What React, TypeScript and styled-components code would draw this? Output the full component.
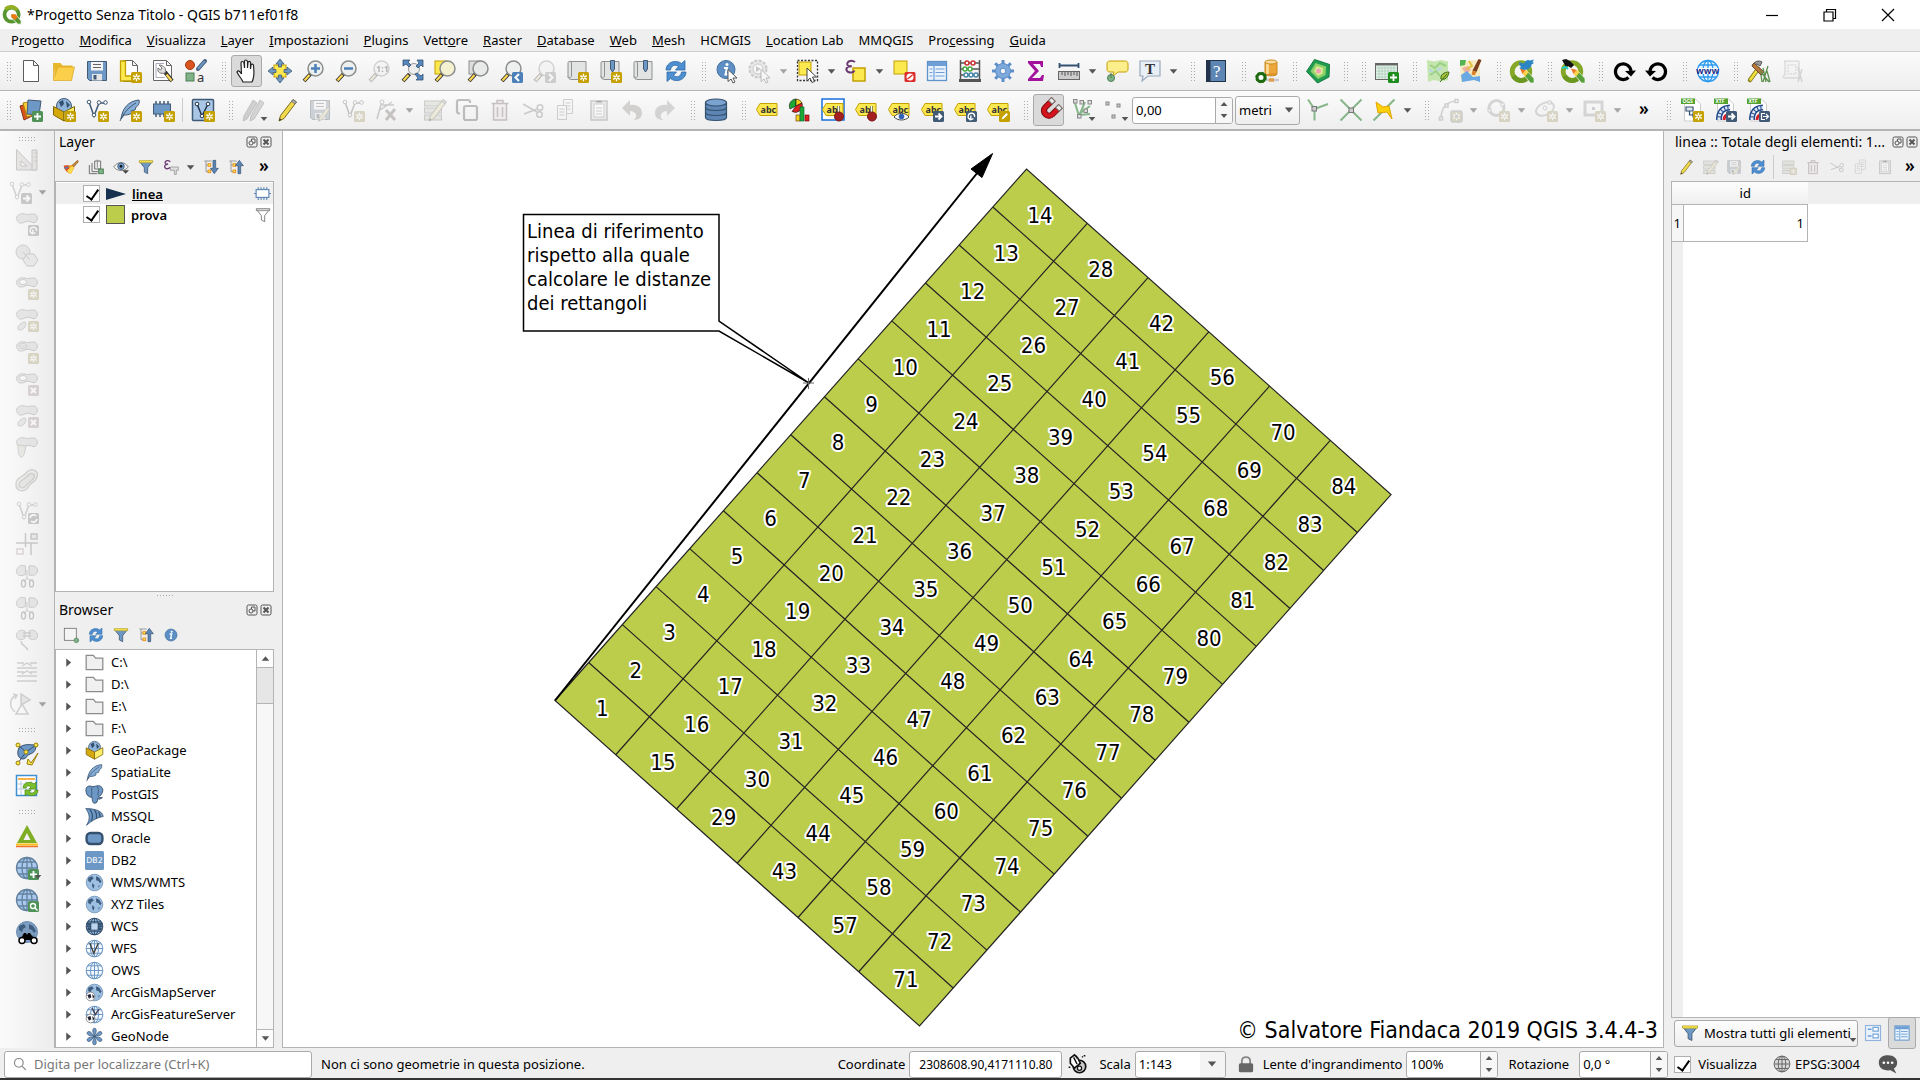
import React from "react";
import styled, { createGlobalStyle, css } from "styled-components";

const ui = '"Noto Sans", "Open Sans", sans-serif';
const mapFont = '"DejaVu Sans Condensed", "DejaVu Sans", "Noto Sans", sans-serif';
const line = "#b4b4b4";

const GlobalStyle = createGlobalStyle`
  * { box-sizing: border-box; }
  body { margin: 0; background: #efefef; color: #000; font: 13px/18px ${ui}; }
  button, input, select { font: inherit; color: inherit; margin: 0; }
  ul { list-style: none; margin: 0; padding: 0; }
`;

/* ---------- icon artwork, drawn on a 24 x 24 grid ---------- */

type P = { children?: React.ReactNode; c?: string; x?: number; y?: number };

const Badge = ({ c = "#c4a000", x = 13, y = 13, children }: P) => (
  <g transform={`translate(${x} ${y})`}>
    <rect width="11" height="11" rx="1.5" fill={c} />
    {children}
  </g>
);
const Star = ({ x, y }: P) => (
  <Badge x={x} y={y}>
    <path d="M5.500 1.800v7.400M2.200 3.600l6.600 3.800M8.800 3.600L2.200 7.400" stroke="#fff" strokeWidth="1.400" />
    <circle cx="5.500" cy="5.500" r="1" fill="#c4a000" />
  </Badge>
);
const Plus = ({ x, y, c = "#4e9258" }: P) => (
  <Badge x={x} y={y} c={c}><path d="M5.500 2v7M2 5.500h7" stroke="#fff" strokeWidth="1.800" /></Badge>
);
const Cross = () => (
  <Badge c="#c68a94"><path d="M3 3l5 5M8 3L3 8" stroke="#fff" strokeWidth="2" /></Badge>
);
const Arrow = ({ c = "#415a75" }: P) => (
  <Badge c={c}><path d="M2 5.500h6M5.500 2.500l3 3-3 3" fill="none" stroke="#fff" strokeWidth="1.800" /></Badge>
);
const Loop = ({ c = "#415a75" }: P) => (
  <Badge c={c}><path d="M4.500 8.500A3.200 3.200 0 1 1 8.500 6M5 4.500l-.500 4.200 3-1" fill="none" stroke="#fff" strokeWidth="1.400" /></Badge>
);
const Lens = ({ fill = "#eef0f0" }: { fill?: string }) => (
  <g>
    <path d="M9.500 15L3 22" stroke="#333" strokeWidth="4" />
    <path d="M8.500 16L3.500 21.500" stroke="#fcd94f" strokeWidth="2.200" />
    <circle cx="14.500" cy="9.500" r="7.500" fill={fill} stroke="#8b8d8d" strokeWidth="1.500" />
  </g>
);
const Page = () => <path d="M5.500 1.500h9l5 5v16h-14z M14.500 1.500v5h5" fill="#fff" stroke="#666" />;
const MapSheet = () => (
  <path d="M4 2.500h17v18H7c-2.500 0-4-1-4-3V4c0-1 .500-1.500 1.500-1.500S6.500 3 6.500 4v13c0 2-3.500 2-3.500 0" fill="#e2e3e3" stroke="#8f9090" />
);
const Mark = () => <path d="M12.500 1.500h4V10l-2 3-2-3z" fill="#6d97c4" stroke="#415a75" />;
const Tag = ({ text = "abc" }: { text?: string }) => (
  <g>
    <path d="M5 5.500h17v12H5L1.500 11.500z" fill="#fce94f" stroke="#c4a000" />
    <text x="5.500" y="14.500" fontSize="9" fontWeight="700" fontFamily={ui} fill="#333">{text}</text>
  </g>
);
const Pin = () => (
  <g><path d="M17.500 8v8" stroke="#666" strokeWidth="2.500" /><path d="M17.500 8v8" stroke="#fff" /><circle cx="18" cy="18.500" r="4.500" fill="#a4201f" stroke="#781414" /></g>
);
const Vee = ({ c = "#415a75" }: P) => (
  <g fill="#fff" stroke={c}>
    <path d="M4 4l5 14 5-13h6" fill="none" strokeWidth="1.500" />
    <circle cx="4" cy="4" r="1.800" /><circle cx="9" cy="17" r="1.800" /><circle cx="14" cy="4.500" r="1.800" /><circle cx="20.500" cy="4.500" r="1.800" />
  </g>
);
const Feather = () => (
  <g><path d="M3 21C4 11 10 3 21 2c1 3-1 6-3 7l-1 3-4 1 1 2c-3 2-6 2-8 2z" fill="#86add6" stroke="#415a75" /><path d="M2 23C6 14 11 9 18 5" fill="none" stroke="#415a75" /></g>
);
const Pencil = () => (
  <g><path d="M18 1.500l3.500 2.500L9 20.500l-5 2.500 1.500-5.500z" fill="#f0d94a" stroke="#7a6a20" /><path d="M18 1.500l3.500 2.500-1.500 2-3.500-2.500z" fill="#aaa" stroke="#666" strokeWidth=".7" /><path d="M4 23l2.500-1.300-1.700-1.500z" fill="#333" /></g>
);
const Blob = ({ hole }: { hole?: boolean }) => (
  <g stroke="#7b817d" fill="#c4cbc6">
    <path d="M4 3c3-3 7 0 10-.5s7-1.500 8 2-1 7-4 6-5-2-8-.5S3 12 2 8s0-4 2-5z" />
    {hole && <ellipse cx="8" cy="6" rx="4" ry="2.500" fill="#fff" />}
  </g>
);
const Globe = ({ fill = "#fff", c = "#6d97c4" }: { fill?: string; c?: string }) => (
  <g fill="none" stroke={c} strokeWidth="1.300">
    <circle cx="12" cy="12" r="10.500" fill={fill} />
    <ellipse cx="12" cy="12" rx="5" ry="10.500" /><path d="M1.500 12h21M3.500 6h17M3.500 18h17M12 1.500v21" />
  </g>
);
const Earth = ({ fill = "#9dbfe2" }: { fill?: string }) => (
  <g><circle cx="12" cy="12" r="10.500" fill={fill} stroke="#6d8db0" /><path d="M4 6l5-2 2 3-3 2-1 3-3-2zM14 4l4 2 3 5-2 2-2-3-3-1zM9 13l3 2-1 5-2-3zM17 16l2-1-2 4z" fill="#3f5d7f" /></g>
);
const Refresh = () => (
  <g fill="#4d8fd0" stroke="#2f6aa6" strokeWidth=".800"><path d="M2 11C2 3 12 0 17.500 4.500L21 1.500v9.500h-9.500l3-3.500C11 5 7 6.500 6.500 11z" /><path d="M22 13c0 8-10 11-15.500 6.500L3 22.500V13h9.500l-3 3.500c3.500 2.500 7.500 1 8-3.500z" /></g>
);
const Funnel = ({ plain }: { plain?: boolean }) => (
  <g><path d="M2 3.500h20L14.500 13v9l-5-2.500V13z" fill={plain ? "#fff" : "#6d97c4"} stroke={plain ? "#666" : "#415a75"} strokeWidth="1.200" /><path d="M2 2.500h20v3H2z" fill={plain ? "#ddd" : "#fce94f"} stroke={plain ? "#666" : "#b9a22b"} /></g>
);
const Tree = () => (
  <g fill="none" stroke="#8b8d8d" strokeWidth="1.300"><path d="M2 3h11M4.500 3v16M4.500 9h5M4.500 19h5" /><rect x="7.500" y="7" width="4" height="4" fill="#fce94f" stroke="#e88a1a" /><rect x="7.500" y="16.500" width="4" height="4" fill="#fce94f" stroke="#e88a1a" /></g>
);
const Box = () => (
  <g stroke="#7d6608"><circle cx="12" cy="8" r="7.500" fill="#8fb3da" stroke="#415a75" /><path d="M7 4l4-2 1 4-3 3zM14 3l4 4-3 3z" fill="#34506f" stroke="none" /><path d="M1.500 8.500L12 14v9L1.500 17z" fill="#d5a90c" /><path d="M22.500 8.500L12 14v9l10.500-6z" fill="#fcee6b" /></g>
);
const Info = () => (
  <g><circle cx="11" cy="10.500" r="9" fill="#5d8ec4" stroke="#41709f" /><circle cx="12" cy="5.500" r="1.500" fill="#fff" /><path d="M9 9h3l-1.500 6.500h2" fill="none" stroke="#fff" strokeWidth="2" /></g>
);
const Pointer = () => <path d="M13 10.500v12l3-2.500 2 4 2-1-2-4h4z" fill="#fff" stroke="#555" />;
const Scissors = () => (
  <g fill="none" stroke="#8a7a7c" strokeWidth="1.500"><path d="M2 6l14 8M3 16l13-5" /><circle cx="19" cy="9.500" r="2.800" /><circle cx="18.500" cy="16.500" r="2.800" /></g>
);
const Trash = () => <path d="M3.500 5.500h17M9 5V2.500h6V5M5.500 5.500v16.500h13V5.500M9.500 9v10M14.500 9v10" fill="#efdcde" stroke="#a05060" strokeWidth="1.500" />;
const Disk = () => (
  <g><path d="M2.500 2.500h19v19h-17l-2-2z" fill="#6d97c4" stroke="#415a75" /><rect x="6" y="3" width="12" height="8.500" fill="#f4f4f4" /><path d="M8 5.500h8M8 8.500h8" stroke="#666" /><rect x="7" y="15" width="10" height="6.500" fill="#e4e4e4" /><rect x="8.500" y="16" width="3" height="4.500" fill="#415a75" /></g>
);
const Rows = () => <g fill="#c8cbb0" stroke="#7c7f68"><rect x="2.500" y="3" width="17" height="5" /><rect x="2.500" y="10" width="17" height="5" /><rect x="2.500" y="17" width="17" height="5" /></g>;
const Grid = () => (
  <g><rect x="2.500" y="2.500" width="19" height="19" fill="#eaf3fc" stroke="#5f93c9" strokeWidth="1.300" /><path d="M3 5h18" stroke="#6d9fd6" strokeWidth="4" /><path d="M9 7v14M4.500 10h3M10.500 10h9M4.500 13.500h3M10.500 13.500h9M4.500 17h3M10.500 17h9" stroke="#6d9fd6" strokeWidth="1.200" /></g>
);
const QRing = ({ children }: P) => (
  <g><circle cx="11" cy="12.500" r="8.800" fill="none" stroke="#86a828" strokeWidth="4.800" /><path d="M3.500 17a9 9 0 0 0 13 3" fill="none" stroke="#6c9822" strokeWidth="4.800" /><path d="M13 15l3.500-3.500 7.500 8V24h-3.500z" fill="#58a03c" stroke="#fff" strokeWidth=".600" /><path d="M10 9.500l6 1.500-3.500 4z" fill="#f0781e" /><path d="M12.500 15l3.500-4 2.500 2.500-3.500 4z" fill="#fbd24a" />{children}</g>
);
const Doc = ({ x = 0, y = 0 }: P) => <g transform={`translate(${x} ${y})`}><path d="M5.500 2.500h9v14h-9z" fill="#f6f6f6" stroke="#888" /><path d="M7.500 6h5M7.500 9h5M7.500 12h5" stroke="#888" /></g>;
const Bag = ({ hole }: { hole?: boolean }) => <g><Blob hole={hole} /><path d="M9 14c3 0 2 4 0 6s-5 3-6 1 2-6 6-7z" fill="#c4cbc6" stroke="#7b817d" /></g>;
const CutBlobs = () => (
  <g stroke="#7b817d" fill="#c4cbc6"><path d="M10.500 2c-4-2-9 1-9 5.500s5 5 9 3z" /><path d="M14 2c5-1 9 1 8.500 5s-4 5-8.500 4z" /><path d="M12 6v8l-3 4M12 14l4 3" fill="none" /><ellipse cx="8.500" cy="19.500" rx="2" ry="3.500" fill="none" stroke="#806a6e" strokeWidth="1.400" /><ellipse cx="16.500" cy="19.500" rx="2" ry="3.500" fill="none" stroke="#806a6e" strokeWidth="1.400" /></g>
);
const Tipped = ({ text }: { text: string }) => (
  <g><path d="M4.500 1h11l5 5v17h-16z" fill="#fff" stroke="#ccc" /><rect x="1" y=".500" width="14" height="5.500" fill="#55a32e" /><text x="2.500" y="5.300" fontSize="5" fontWeight="700" fontFamily={ui} fill="#fff">{text}</text></g>
);
const Pipe = () => <g fill="none"><path d="M6 22C6 14 9 10 17 9.500" stroke="#234a8c" strokeWidth="6" /><path d="M6 22C6 14 9 10 17 9.500" stroke="#dbe6f6" strokeWidth="3" strokeDasharray="2.500 1" /><path d="M11 22c0-4 2-5 5-6" stroke="#d3202a" strokeWidth="3" /></g>;

const art: Record<string, React.ReactNode> = {
  new: <path d="M4.500 1.500h10l5 5v16h-15z M14.500 1.500v5h5" fill="#fff" stroke="#5c5c5c" />,
  open: <g><path d="M1.500 4h7l2 2.500h10v4H5L3 21z" fill="#e8b92b" /><path d="M1.500 4v17.500h18L22.500 8H6L2.500 18" fill="#fccf4a" stroke="#d9a520" strokeWidth=".7" /></g>,
  save: <Disk />,
  newLayout: <g><Page /><path d="M2.500 2h5v15h8v5h-13z" fill="#fce94f" stroke="#c4a000" strokeWidth="1.300" /><Star /></g>,
  layouts: <g><path d="M2.500 1.500h13l5 5v15h-18z M15.500 1.500v5h5" fill="#fff" stroke="#666" /><path d="M5 4.500h8M5 4.500v14h9" stroke="#aab" fill="none" /><path d="M14 13l7 9" stroke="#333" strokeWidth="4" /><path d="M15.500 15.500l5 6" stroke="#fcd94f" strokeWidth="2.200" /><path d="M8 6l3 3-1.500 2L7 9c-1 5 3 6 7 5 2-4-1-8-6-8z" fill="#ddd" stroke="#777" /></g>,
  styles: <g><circle cx="6" cy="6" r="4.500" fill="#d9541e" stroke="#a33a10" /><path d="M14 10l7-8" stroke="#415a75" strokeWidth="4" strokeLinecap="round" /><path d="M14 10l7-8" stroke="#6d97c4" strokeWidth="2" /><rect x="2" y="14" width="8" height="8" fill="#7fb287" stroke="#4e7f57" /><text x="13" y="22.500" fontSize="13" fontFamily={ui} fill="#333">a</text></g>,
  pan: <path d="M8 23c-1-3-5-7-6-10 1-2 3-1 4.500 2L6 4c0-2 2.500-2 3 0l.500 5V2.500c0-2 2.500-2 3 0V9l.500-5.500c0-1.500 2.500-1.500 2.500 0V10l.500-4c.500-1.500 2.500-1 2.500.5C19 14 20 17 17 23z" fill="#fff" stroke="#222" strokeWidth="1.200" />,
  panSel: <g><rect x="6" y="6" width="12" height="12" fill="#fce94f" stroke="#c4a000" /><path d="M12 0l4 5h-2.500v3h-3V5H8zM12 24l4-5h-2.500v-3h-3v3H8zM0 12l5-4v2.500h3v3H5V16zM24 12l-5-4v2.500h-3v3h3V16z" fill="#6d97c4" stroke="#415a75" strokeWidth=".8" /></g>,
  zoomIn: <g><Lens /><path d="M14.500 5v9M10 9.500h9" stroke="#4d80b8" strokeWidth="2.500" /></g>,
  zoomOut: <g><Lens /><path d="M10 9.500h9" stroke="#4d80b8" strokeWidth="2.500" /></g>,
  zoomNative: <g><Lens /><text x="9" y="13" fontSize="9" fontWeight="700" fontFamily={ui} fill="#333">1:1</text></g>,
  zoomFull: <g><path d="M9.500 15L3 22" stroke="#333" strokeWidth="4" /><path d="M8.500 16L3.500 21.500" stroke="#fcd94f" strokeWidth="2.200" /><circle cx="14" cy="10" r="5.500" fill="#eee" stroke="#999" /><path d="M3 1h7L8 3l3 3-2 2-3-3-3 2zM23 1v7l-2-2-3 3-2-2 3-3-2-3zM23 21h-7l2-2-3-4 2-1 4 3 2-2z" fill="#5687be" stroke="#34506f" strokeWidth=".8" /></g>,
  zoomSel: <g><rect x="2" y="2" width="12" height="13" fill="#fce94f" stroke="#c4a000" /><Lens fill="#f4f1d0" /></g>,
  zoomLayer: <g><rect x="3" y="2" width="12" height="13" fill="#ddd" stroke="#8b8d8d" /><Lens fill="#e8eaea" /></g>,
  zoomLast: <g><Lens /><Badge c="#4d80b8"><path d="M7 2L3.500 5.500 7 9" fill="none" stroke="#fff" strokeWidth="2" /></Badge></g>,
  zoomNext: <g><Lens /><Badge c="#888"><path d="M4 2l3.500 3.500L4 9" fill="none" stroke="#fff" strokeWidth="2" /></Badge></g>,
  newView: <g><MapSheet /><Star /></g>,
  newMark: <g><MapSheet /><Mark /><Star /></g>,
  marks: <g><MapSheet /><Mark /></g>,
  refresh: <Refresh />,
  identify: <g><Info /><Pointer /></g>,
  action: <g><circle cx="10" cy="10" r="8.500" fill="#ccc" stroke="#777" strokeWidth="2" strokeDasharray="3 1.500" /><circle cx="10" cy="10" r="5" fill="#fff" stroke="#777" /><path d="M8 7l5 3-5 3z" fill="#777" /><Pointer /></g>,
  select: <g><rect x="1.500" y="1.500" width="20" height="20" fill="none" stroke="#333" strokeDasharray="2 1.500" strokeWidth="1.300" /><rect x="3" y="3" width="12" height="13" fill="#fce94f" stroke="#c4a000" /><path d="M11 9v13l3-3 2 4.500 2.500-1-2-4.500h4z" fill="#fff" stroke="#444" /></g>,
  selExpr: <g><rect x="9" y="9" width="12" height="13" fill="#fce94f" stroke="#c4a000" strokeWidth="1.500" /><path d="M11 3C7 0 2 3 3.500 6c1 1.500 3 1.500 4 1C3 7 1 10 3.500 12.500c2 2 6 1 7-1" fill="none" stroke="#6b3a72" strokeWidth="2" /></g>,
  deselect: <g><rect x="2" y="2" width="13" height="13" fill="#fce94f" stroke="#c4a000" /><rect x="12.500" y="13" width="11" height="10" rx="1.500" fill="#dd2c2c" /><circle cx="18" cy="18" r="3.500" fill="#fff" /><path d="M15.500 20l5-4" stroke="#dd2c2c" strokeWidth="1.500" /></g>,
  table: <Grid />,
  abacus: <g fill="none" strokeWidth="1.500"><path d="M2.500 1v21M21.500 1v21M2.500 4h19M2.500 10h19M2.500 16h19" stroke="#555" /><path d="M1 21.500h22" stroke="#555" strokeWidth="3" /><g fill="#fff"><circle cx="9" cy="4" r="2" stroke="#c33" /><circle cx="15" cy="4" r="2" stroke="#c33" /><circle cx="7" cy="10" r="2" stroke="#4a4" /><circle cx="12" cy="10" r="2" stroke="#4a4" /><circle cx="8" cy="16" r="2" stroke="#48a" /><circle cx="13" cy="16" r="2" stroke="#48a" /><circle cx="18" cy="16" r="2" stroke="#48a" /></g></g>,
  gear: <g><path d="M12 1v22M1 12h22M4.200 4.200l15.600 15.600M19.800 4.200L4.200 19.800" stroke="#5c8fca" strokeWidth="3" /><circle cx="12" cy="12" r="7.500" fill="#7eaadb" stroke="#5c8fca" /><circle cx="12" cy="12" r="2.800" fill="#f4f4f4" stroke="#5c8fca" /></g>,
  sigma: <path d="M4 2h15v6h-2l-1-3H9l6 7-7 7h8l2-3h2l-1 6H4v-2l7-8-7-8z" fill="#a3129c" />,
  ruler: <g><path d="M2 6.500h20M2.500 4v5M21.500 4v5" stroke="#34506f" strokeWidth="1.800" fill="none" /><rect x="1.500" y="12.500" width="21" height="8" fill="#ccc" stroke="#666" /><path d="M5 13v3M8 13v4M11 13v3M14 13v4M17 13v3M20 13v4" stroke="#555" /></g>,
  tip: <g><path d="M5 2h15c2 0 3 1 3 3v5c0 2-1 3-3 3h-7l-6 5 2-5H5c-2 0-3-1-3-3V5c0-2 1-3 3-3z" fill="#fcee8a" stroke="#c4a000" /><circle cx="6" cy="19" r="3.500" fill="#7fb287" stroke="#4e7f57" /><path d="M6 14v5" stroke="#4e7f57" /></g>,
  textNote: <g><path d="M2 2h20v15H10l-6 5 1-5H2z" fill="#e8eff5" stroke="#9ab" strokeWidth="1.200" /><text x="7" y="14.500" fontSize="15" fontWeight="700" fontFamily='"Liberation Serif", serif' fill="#333">T</text></g>,
  help: <g><rect x="2.500" y="1.500" width="19" height="21" fill="#5d86b4" stroke="#22334a" /><path d="M4.500 2v20" stroke="#22334a" strokeWidth="4" /><text x="9" y="18" fontSize="17" fontFamily='"Liberation Serif", serif' fill="#fff">?</text></g>,
  dbGear: <g><path d="M10 3v12h12V3" fill="#eda63a" stroke="#c98a20" /><path d="M12.500 4v11" stroke="#fbe0a0" strokeWidth="2.500" /><ellipse cx="16" cy="3" rx="6" ry="2" fill="#fbdc98" stroke="#c98a20" /><path d="M10 15c0 2.500 12 2.500 12 0" fill="#e0942a" stroke="#c98a20" /><path d="M11 21h13" stroke="#c9c9d4" strokeWidth="2.500" /><path d="M14 21h5" stroke="#e0a050" strokeWidth="3.500" /><circle cx="6" cy="18.500" r="4" fill="#fff" stroke="#1f6a10" strokeWidth="3" /><circle cx="6" cy="18.500" r="4.800" fill="none" stroke="#1f6a10" strokeWidth="1.800" strokeDasharray="2 1.770" /></g>,
  penta: <g><path d="M8.500 .500L23.500 5.500 23 18 11.500 24 .500 12.500z" fill="#1f9c50" stroke="#157a3c" /><path d="M9.500 4L20 7.500 19.500 16 12 20 4.500 12.500z" fill="#8fd06a" /><path d="M10.500 7L17 9l-.500 5.500-4.500 2.500L8 12z" fill="#d8ec90" /><circle cx="12.500" cy="12" r="2.500" fill="#f0a0b8" /></g>,
  gridPlus: <g><rect x=".500" y="4.500" width="22" height="16" fill="#e4f2ea" stroke="#666" /><path d="M1 5.500h21" stroke="#666" strokeWidth="2" /><path d="M4 6v14M7 6v14M10 6v14M13 6v14M16 6v14M19 6v14M1 9h21M1 12h21M1 15h21M1 18h21" stroke="#a9cdb9" strokeWidth=".800" /><Plus c="#1d8e1d" /></g>,
  mapLeaf: <g><path d="M1 1l7 1.500L15 1l7 1.500V21l-7 1.500L8 21l-6 2z" fill="#c4e6ae" /><path d="M4 6l5 3 5-5 6 3M4 16l6-4 4 5" stroke="#9acf86" strokeWidth="2" fill="none" /><path d="M11 12c2-3 4-3 5-2M3 11l4 2" stroke="#b8d6e6" strokeWidth="2" fill="none" /><path d="M15 20c-1-4 3-7 8-7-1 6-4 8-8 7zM14 23l7-8" fill="#a8c43a" stroke="#3f6d1a" /></g>,
  mapBrush: <g><path d="M1 1l7 1 7-1 6 1v20l-8-1-11 2z" fill="#f4ecc0" /><path d="M1 1h6l-1 5-5 1z" fill="#52b552" /><path d="M3 9l6-2 3 4-5 4z" fill="#f0b0a0" /><path d="M2 16l6-4 6 6 7-1v6l-6-2-12 2z" fill="#6aa8e4" /><path d="M10 2l3 5-5 3" stroke="#e4c040" strokeWidth="2" fill="none" /><path d="M19.500 0l3 1-5 12-4-1.500z" fill="#7b3f1d" /><path d="M13.500 11.500l4 1.500-2 3.500-3-1z" fill="#d9822a" /></g>,
  qBird: <QRing><path d="M9 3l5 1.500c1-3 4-4.500 6-3l4-1-1.500 2.500L24 4l-2.500 1.500c0 4-5 6-9 5L9 9l2-1-1.500-2z" fill="#2d86c4" /></QRing>,
  qSat: <QRing><path d="M1 1l4-1 4 2 4 4-3 3-3-2-2 1z" fill="#111" /><path d="M1 9l4-1 2 2" stroke="#2cc" strokeWidth="2" fill="none" /></QRing>,
  redo2: <g><path d="M16.500 18.500A7.800 7.800 0 1 1 19 12" fill="none" stroke="#000" strokeWidth="3.200" /><path d="M24 11.500l-5 6-6-5.500z" fill="#000" /></g>,
  undo2: <g><path d="M7.500 18.500A7.800 7.800 0 1 0 5 12" fill="none" stroke="#000" strokeWidth="3.200" /><path d="M0 11.500l5 6 6-5.500z" fill="#000" /></g>,
  www: <g><Globe c="#2e9aee" fill="#e8f6ff" /><rect x="2" y="9" width="20" height="6" fill="#fff" /><text x="0" y="15" fontSize="9" fontWeight="700" fontFamily={ui} fill="#1b2f8a">www</text></g>,
  hammer: <g><path d="M3 21L11 10" stroke="#8a8020" strokeWidth="4.500" strokeLinecap="round" /><path d="M3.500 20.500L11 10" stroke="#f0e03a" strokeWidth="2.500" strokeLinecap="round" /><path d="M5 7c2-5 7-6 10-4l-2 4-3-2z" fill="#999" stroke="#555" /><path d="M7 4l10 9-3 3L5 7z" fill="#b9773a" stroke="#6a4a2a" /><path d="M13 12l9 11M16 9l3 14M21 7l-5 16M20 12l3 11M14 16l1 7" stroke="#5f8f4f" strokeWidth="1.300" /></g>,
  plan: <g><path d="M4 2h15v17H5c-3 0-3-3 0-3V2" fill="#f0f0f0" stroke="#888" /><rect x="8" y="6" width="8" height="9" fill="none" stroke="#999" strokeDasharray="2 1" /><path d="M18 8l4 15M22 10l-4 13" stroke="#999" strokeWidth="1.500" /></g>,

  addLayer: <g><path d="M1 8l10-3 4 12-10 5z" fill="#d9541e" stroke="#8a3210" /><path d="M4 5l11-2 3 13-10 3z" fill="#fccf3a" stroke="#a8820c" /><path d="M9 2l13 1-2 14-12-1z" fill="#6d97c4" stroke="#415a75" /><Plus /></g>,
  geopkg: <g><Box /><Star /></g>,
  shp: <g><Vee /><Star /></g>,
  spatial: <g><Feather /><Star /></g>,
  memory: <g><path d="M5 3v16M9 3v16M13 3v16M17 3v16" stroke="#415a75" strokeWidth="1.500" /><rect x="2.500" y="6" width="17" height="10" fill="#6d97c4" stroke="#415a75" /><Star /></g>,
  virtual: <g><rect x="1.500" y="1.500" width="21" height="21" rx="1" fill="#a9c6e6" stroke="#415a75" strokeWidth="1.500" /><path d="M6 6l5 12 6-12" stroke="#22334a" fill="none" strokeWidth="1.500" /><circle cx="6" cy="6" r="1.800" fill="#fff" stroke="#22334a" /><circle cx="17" cy="6" r="1.800" fill="#fff" stroke="#22334a" /><circle cx="11" cy="18" r="1.800" fill="#fff" stroke="#22334a" /><Star /></g>,
  pencils: <g><path d="M11 2l4 3L5 21l-4 2 1-5z" fill="#888" stroke="#666" /><path d="M18 2l4 3-10 16-4 2 1-5z" fill="#999" stroke="#666" /></g>,
  pencil: <Pencil />,
  saveEdit: <g><Disk /><g transform="translate(8 8) scale(.66)"><Pencil /></g></g>,
  addFeat: <g><Vee c="#666" /><Star /></g>,
  vertex: <g><path d="M3 21L8 3M8 7h12M6 12l12-8" stroke="#777" strokeWidth="1.500" /><circle cx="8" cy="4" r="2" fill="#fff" stroke="#777" /><path d="M12 22l9-11M12 12l9 10" stroke="#866" strokeWidth="3" /></g>,
  attrs: <g><Rows /><g transform="translate(3 0)"><Pencil /></g></g>,
  copy2: <g fill="none" stroke="#555" strokeWidth="2.200"><rect x="9" y="8" width="13" height="14" rx="2" fill="#f4f4f4" /><path d="M5 15.500c-2 0-3-.500-3-2V4c0-1.500.500-2 2-2h9c1.500 0 2 .500 2 2v1" /></g>,
  trash: <Trash />,
  cut: <Scissors />,
  copy: <g><Doc x={4} y={-1} /><Doc x={-2} y={5} /></g>,
  paste: <g><rect x="4" y="3" width="16" height="19" fill="#ddd" stroke="#777" strokeWidth="1.500" /><rect x="7" y="6" width="10" height="13" fill="#fff" stroke="#888" /><path d="M9 10h6M9 13h6M9 16h6M9 2.500h6v2H9z" stroke="#888" /></g>,
  undo: <path d="M10 2v5c8-1 12 3 12 8s-4 7-8 7c3-2 4-8-4-9v5L2 10z" fill="#9a8f84" />,
  redo: <path d="M14 2v5C6 6 2 10 2 15s4 7 8 7c-3-2-4-8 4-9v5l8-8z" fill="#8f9a94" />,
  db: <g fill="#5d86b4" stroke="#34506f" strokeWidth="1.200"><path d="M1.500 4.500v15c0 4 21 4 21 0v-15" /><ellipse cx="12" cy="4.500" rx="10.500" ry="3.500" fill="#7ba3d0" /><path d="M1.500 9.500c0 4 21 4 21 0M1.500 14.500c0 4 21 4 21 0" fill="none" /></g>,
  label: <Tag />,
  chart: <g><path d="M8 8V1a7 7 0 0 0-6 10z" fill="#1da836" stroke="#111" strokeWidth=".600" /><path d="M8 8V1a7 7 0 0 1 6 4z" fill="#f7d11c" stroke="#111" strokeWidth=".600" /><path d="M8 8l-4 5.500A7 7 0 0 0 14 5z" fill="#d22" stroke="#111" strokeWidth=".600" /><rect x="8" y="17" width="4" height="6" fill="#f7d11c" stroke="#630" strokeWidth=".600" /><rect x="12" y="9" width="4" height="14" fill="#1da836" stroke="#063" strokeWidth=".600" /><rect x="17" y="17" width="4" height="6" fill="#d22" stroke="#600" strokeWidth=".600" /></g>,
  labPin: <g><rect x="1" y="1" width="22" height="21" fill="#fff" stroke="#1a6fdc" strokeWidth="1.500" /><Tag text="ab" /><Pin /></g>,
  labPin2: <g><Tag text="ab" /><Pin /></g>,
  labEye: <g><Tag /><path d="M7 19c4-5 11-5 15 0-4 4-11 4-15 0z" fill="#fff" stroke="#444" /><circle cx="14.500" cy="18.500" r="2.800" fill="#2f62b8" /></g>,
  labMove: <g><Tag /><Arrow /></g>,
  labRot: <g><Tag /><Loop /></g>,
  labEdit: <g><Tag /><Badge><path d="M2.500 8.500l1-2.500 4-4 1.500 1.500-4 4z" fill="#fff" /></Badge></g>,
  magnet: <g transform="rotate(45 12 12)"><path d="M5 1.500h5v11c0 3 5 3 5 0v-11h5v11c0 10-15 10-15 0z" fill="#d4141c" stroke="#7a0c10" /><path d="M5 1.500h5v4H5zM15 1.500h5v4h-5z" fill="#eee" stroke="#777" /></g>,
  snapV: <g fill="#ddd" stroke="#888"><path d="M5 5l4 13 6-14M9 16l11-8M9 17l11-1" fill="none" stroke="#84b88a" strokeWidth="2" /><rect x="3.500" y="1.500" width="3.500" height="3.500" /><rect x="10" y="2.500" width="3.500" height="3.500" /><rect x="18" y="2.500" width="3.500" height="3.500" /><rect x="7.500" y="16.500" width="3.500" height="3.500" /><rect x="14" y="11" width="3.500" height="3.500" /></g>,
  snapD: <g fill="#ccc" stroke="#888"><rect x="3" y="4" width="3" height="3" /><rect x="14" y="6" width="3" height="3" /><rect x="9" y="17" width="3" height="3" /></g>,
  topo: <g stroke="#86b68a" strokeWidth="2" fill="none"><path d="M2 1.500L8.500 11l0 11.500M8.500 11L22 6" /><rect x="6" y="8.500" width="4.500" height="4.500" fill="#ccc" stroke="#777" strokeWidth="1" /></g>,
  inter: <g stroke="#86b68a" strokeWidth="2" fill="none"><path d="M1.500 1.500l21 21M22.500 1.500l-21 21" /><rect x="10" y="10" width="4.500" height="4.500" fill="#ccc" stroke="#777" strokeWidth="1" /></g>,
  trace: <g><path d="M22.500 1.500l-21 21" stroke="#86b68a" strokeWidth="2" /><path d="M4 4l7 5 6-1 3 13-5-7-9 1z" fill="#fbd10d" stroke="#e2a300" /></g>,
  arc: <g fill="none" stroke="#888" strokeWidth="1.500"><path d="M3 21C3 10 8 4 18 3" /><rect x="1.500" y="19" width="3" height="3" fill="#fff" /><rect x="7" y="6" width="3" height="3" fill="#fff" /><rect x="17" y="1.500" width="3" height="3" fill="#fff" /><Star /></g>,
  circ: <g><circle cx="10.500" cy="10" r="7.500" fill="none" stroke="#999" strokeWidth="3" /><rect x="15" y="5" width="3" height="3" fill="#fff" stroke="#888" /><rect x="2" y="11" width="3" height="3" fill="#fff" stroke="#888" /><Star /></g>,
  ell: <g><ellipse cx="11" cy="11" rx="9.500" ry="6" fill="none" stroke="#999" strokeWidth="2" transform="rotate(-25 11 11)" /><circle cx="11" cy="10" r="2" fill="none" stroke="#888" /><rect x="14" y="3" width="3" height="3" fill="#fff" stroke="#888" /><Star /></g>,
  rect: <g><rect x="3" y="4" width="17" height="13" fill="none" stroke="#999" strokeWidth="3" /><rect x="10" y="9" width="3" height="3" fill="#888" /><Star /></g>,
  ogs: <g><Tipped text="OGS" /><path d="M6 9h7v4H6zM13 15h6v4h-6zM9.500 13v4H13" fill="#dfe8f2" stroke="#34506f" strokeWidth="1.200" /><Star /></g>,
  xtf1: <g><Tipped text="XTF" /><Pipe /><Arrow /></g>,
  xtf2: <g><Tipped text="XTF" /><Pipe /><Badge c="#415a75"><path d="M6 2.500H2.500v6H6M4 5.500h5M7 3l2.500 2.500L7 8" fill="none" stroke="#fff" strokeWidth="1.200" /></Badge></g>,

  cad: <g fill="#d0c4bc" stroke="#7b7470"><path d="M1.500 1.500V22h20zM6 13v5h6z" fillRule="evenodd" /><path d="M17 2h5v20h-5zM19.500 5h2.500M19.500 9h2.500M19.500 13h2.500" /></g>,
  moveF: <g><Vee c="#888" /><Arrow c="#777" /></g>,
  rotF: <g><Blob /><Loop c="#777" /></g>,
  simp: <g fill="#c4cbc6" stroke="#7b817d"><circle cx="8" cy="8" r="7" /><path d="M12 10h7l4 6-4 6h-7l-4-6z" fill="#d0d6dc" /><path d="M8 8l7 8" /></g>,
  ring: <g><Blob hole /><Star /></g>,
  part: <g><Bag /><Star /></g>,
  fillR: <g><Blob hole /><ellipse cx="8" cy="6" rx="3" ry="1.800" fill="#bbb" /><Star /></g>,
  delR: <g><Blob hole /><Cross /></g>,
  delP: <g><Bag /><Cross /></g>,
  reshape: <g><Blob /><path d="M3 9c0 5 0 11 3 12s4-6 5-11z" fill="#cdccb2" stroke="#8a8a76" /></g>,
  offset: <g fill="#c4cbc6" stroke="#8a8a76" strokeWidth="1.300"><path d="M12 4c5-5 12-1 10 5s-6 5-8 9-6 6-10 4-4-8-1-11 6-3 9-7z" fill="#dcdccb" /><path d="M13.500 7c3-3 7-1 5.500 2.500s-5 4-7 7-4 4-6.500 3-1.500-5 .5-6.500 5-3 7.500-6z" /></g>,
  nodes: <g><Vee c="#888" /><Badge c="#777"><path d="M2 5a3.500 3.500 0 0 1 6-2M9 6a3.500 3.500 0 0 1-6 2" stroke="#fff" strokeWidth="1.800" fill="none" /></Badge></g>,
  trim: <g stroke="#777" fill="none" strokeWidth="1.500"><path d="M10.500 1v14M1 11h22M16 11v12" /><rect x="16" y="2" width="6" height="5" fill="#d8d3b4" /><rect x="2" y="17" width="6" height="5" stroke="#c68a94" /></g>,
  split: <CutBlobs />,
  merge: <g stroke="#7b817d" fill="#c4cbc6"><path d="M10 3c-4-2-8.500 0-8.500 4.500S6 13 10 10z" /><path d="M14 3c4-2 8.500 0 8.500 4.500S18 13 14 10z" /><path d="M8 5h8M8 8h8M6 13c0 4 4 4 7 9" fill="none" strokeWidth="1.500" /></g>,
  mergeA: <g stroke="#888" fill="none" strokeWidth="1.300"><path d="M2 3h7M15 3h7M2 8h20M2 12h7M15 12h7M2 16h20M2 21h20M7 6l5-3 5 3M7 14l5-3 5 3" /></g>,
  rotPt: <g stroke="#888" fill="none" strokeWidth="1.500"><path d="M7 20C1 15 1 7 8 3M5 2l4 1-2 4" /><path d="M13 2v11l9-5z" fill="#c4cbc6" /><path d="M8 22l6-10 6 10z" fill="#fff" /></g>,
  topoCheck: <g><path d="M4 6c5-5 12-3 16-3 2 4-1 8-5 9s-3 5-7 5-7-5-4-11z" fill="#6d97c4" stroke="#34506f" /><path d="M3 3l8 7 10-7M3 21L11 10" stroke="#34506f" fill="none" /><g fill="#fce94f" stroke="#9a7d0a"><circle cx="3" cy="3" r="2" /><circle cx="21" cy="3" r="2" /><circle cx="11" cy="10" r="2" /><circle cx="3" cy="21" r="2" /><path d="M13 17l3 4 7-10-6 12-5-1z" /></g></g>,
  tableSync: <g><rect x="1.500" y="1.500" width="20" height="20" fill="#fff" stroke="#3d8fd0" strokeWidth="1.500" /><path d="M3 5h17" stroke="#fbb04a" strokeWidth="2" /><path d="M6 7v14M11 7v14M16 7v14M2 10h19M2 15h19" stroke="#bcd" /><path d="M8 14c0-6 8-7 11-4l2-2v7h-7l2-2c-2-2-5-1-5 1zM23 16c0 6-8 7-11 4l-2 2v-6h6l-2 2c2 2 6 1 6-2z" fill="#7cbf2c" stroke="#4b8a12" strokeWidth=".700" /></g>,
  tri: <g><path d="M12 1l10 18H2zM12 9l-3.500 7h7z" fill="#7fae24" fillRule="evenodd" /><path d="M1 20.500h22" stroke="#fbc21a" strokeWidth="2" /><path d="M1 22.500h22" stroke="#f0742a" strokeWidth="1.500" /></g>,
  globeAdd: <g><Globe fill="#a9c9ee" c="#63819f" /><Plus /></g>,
  globeFind: <g><Globe fill="#a9c9ee" c="#63819f" /><Badge c="#4e9258"><circle cx="5" cy="5" r="2.500" fill="none" stroke="#fff" strokeWidth="1.400" /><path d="M7 7l2.500 2.500" stroke="#fff" strokeWidth="1.400" /></Badge></g>,
  binoc: <g><Earth fill="#7c9dc0" /><path d="M5 20l4-7h2l1 2 1-2h2l5 7z" fill="#000" /><circle cx="7" cy="20.500" r="3" fill="#fff" stroke="#000" strokeWidth="1.500" /><circle cx="19" cy="20.500" r="3" fill="#fff" stroke="#000" strokeWidth="1.500" /></g>,

  brush: <g><path d="M22 2l1 2-7 8-3-2z" fill="#c98a3a" stroke="#7a4d12" /><path d="M1 10l12-1 4 4-5 9c-5 0-9-5-11-12z" fill="#f0a030" /><path d="M1 10l7-.500 3 8-4 2c-3-2-5-5-6-9.500z" fill="#e0442c" /><path d="M6 17l8-6 2 2-4 9c-3 0-5-2-6-5z" fill="#fcdc4a" /><path d="M2 14l6-2" stroke="#58a" strokeWidth="2" /></g>,
  addGroup: <g fill="none" stroke="#666" strokeWidth="1.400"><path d="M2 9v13h12M6 6v13h11M10 3v12h9V3z" /><path d="M14 1v12" stroke="#888" /><rect x="16" y="15" width="7" height="7" fill="#7fb287" stroke="#4e7f57" /></g>,
  eye: <g><path d="M1 12c6-9 16-9 22 0-6 7-16 7-22 0z" fill="#f4f4f4" stroke="#777" strokeWidth="1.300" /><circle cx="12" cy="11" r="5" fill="#6d97c4" stroke="#34506f" /><circle cx="12" cy="11" r="2" fill="#111" /><path d="M14 17h10l-5 5z" fill="#444" /></g>,
  funnel: <Funnel />,
  funnelPlain: <Funnel plain />,
  exprFilter: <g><path d="M11 4C7 1 2 3 3.500 6.500c1 1.500 3 1.500 4 1C3 8 1 11 3.500 13.500c2 2 6 1 7-1" fill="none" stroke="#6b3a72" strokeWidth="2" /><path d="M11 12h12v5h-3v6h-3v-6h-6z" fill="#ddd" stroke="#888" /></g>,
  expand: <g><Tree /><path d="M15 2h4v12h4l-6 8-6-8h4z" fill="#5d86b4" stroke="#34506f" /></g>,
  collapse: <g><Tree /><path d="M15 22h4V10h4l-6-8-6 8h4z" fill="#5d86b4" stroke="#34506f" /></g>,
  chip: <g fill="none" stroke="#5d86b4" strokeWidth="1.600"><rect x="3" y="6.500" width="18" height="11" fill="#fff" /><path d="M0 12h3M21 12h3M6 3v3M10 3v3M14 3v3M18 3v3M6 18v3M10 18v3M14 18v3M18 18v3" /></g>,
  addSel: <g><rect x="2" y="2" width="18" height="18" fill="#f4f4f4" stroke="#777" strokeWidth="1.300" /><circle cx="20" cy="20" r="3.500" fill="#7fb287" stroke="#4e7f57" /></g>,
  info: <g transform="translate(1 1.500)"><Info /></g>,
  newField: <g><Rows /><Star /></g>,

  folder: <path d="M1.500 3h9l3 3.500h9V21h-21z" fill="#f0f0f0" stroke="#8b8d8d" strokeWidth="1.600" />,
  box: <Box />,
  feather: <Feather />,
  postgis: <g><path d="M2 3c3-3 6-1 8-1s4-1 7-1 7 3 5 8-3 5-5 5l1 2 4 0-4 2-2-1c0 4-1 6-4 6s-3-6-3-8c-2 1-4 0-4-1-3 0-5-8-3-11z" fill="#6d97c4" stroke="#34506f" strokeWidth="1.200" /><path d="M9 3c-2 4 1 6-1 11M15 2c3 3 2 7 1 11" stroke="#34506f" fill="none" /></g>,
  mssql: <g><path d="M1 2c12 0 21 3 22 10-6 1-13 4-21 11 5-8 4-14-1-21z" fill="#6d97c4" stroke="#34506f" /><path d="M6 3c4 5 4 11 2 15M12 4c3 4 3 8 2 11M17 6c2 3 2 5 2 7" stroke="#34506f" fill="none" strokeWidth="1.500" /></g>,
  oracle: <rect x="2" y="5" width="20" height="14" rx="5" fill="#6d97c4" stroke="#34506f" strokeWidth="3" />,
  db2: <g><rect width="24" height="24" rx="2" fill="#6d97c4" /><text x="1.500" y="15.500" fontSize="10" fontFamily='"DejaVu Sans", sans-serif' fill="#fff">DB2</text></g>,
  earth: <Earth />,
  wcs: <g><Globe fill="#9dbfe2" c="#34506f" /><path d="M2 9h20M3 15h18" stroke="#34506f" strokeWidth="4" /><path d="M8 8h8v8H8z" fill="#bcd4ee" /></g>,
  wfs: <g><Globe fill="#f4f9ff" /><path d="M6 5l5 13 6-13" fill="none" stroke="#444" strokeWidth="1.800" /></g>,
  ows: <Globe fill="#f4f9ff" />,
  arcmap: <g><Earth /><circle cx="7" cy="17" r="5.500" fill="#fff" stroke="#777" /><path d="M3 15l4-1 1 4-3 2zM9 14l3 3-2 3z" fill="#223" /></g>,
  arcfeat: <g><Globe fill="#f4f9ff" /><path d="M9 4l4 8 5-7" fill="none" stroke="#445" strokeWidth="1.800" /><circle cx="7" cy="17" r="5.500" fill="#fff" stroke="#777" /><path d="M3 15l4-1 1 4-3 2zM9 14l3 3-2 3z" fill="#223" /></g>,
  geonode: <g stroke="#34506f" strokeWidth=".800" fill="#6d97c4">{[0, 60, 120, 180, 240, 300].map(a => <path key={a} d="M12 12c-1-4-3-6-2-9 .5-2 3.500-2 4 0 1 3-1 5-2 9z" transform={`rotate(${a} 12 12)`} />)}</g>,

  search: <g fill="none" stroke="#888" strokeWidth="2"><circle cx="10" cy="10" r="7.500" /><path d="M15.500 15.500L22 22" /></g>,
  mouse: <g><circle cx="15" cy="15" r="7.500" fill="#ccc" stroke="#111" strokeWidth="2" /><path d="M4 5l5-4 4 4 3 6-7 6-5-6z" fill="#fff" stroke="#111" strokeWidth="2" /><path d="M8 4l4 8M12 5l-1-3M18 4l1-1M20 2h2M2 16h2" stroke="#111" strokeWidth="1.800" /><circle cx="15" cy="17" r="2.500" fill="#fff" stroke="#111" strokeWidth="1.500" /></g>,
  lock: <g><path d="M6.500 12V8c0-7 11-7 11 0v4" fill="none" stroke="#888" strokeWidth="2.500" /><rect x="2.500" y="11" width="19" height="12" rx="2" fill="#666" /></g>,
  crs: <Globe fill="#d8d8d8" c="#666" />,
  bubble: <g><path d="M12 1.500c7 0 11 4 11 9 0 4-2 6-4 7l3 6-7-4c-9 1-14-3-14-9s4-9 11-9z" fill="#555" /><circle cx="7" cy="10.500" r="1.600" fill="#fff" /><circle cx="12" cy="10.500" r="1.600" fill="#fff" /><circle cx="17" cy="10.500" r="1.600" fill="#fff" /></g>,
  form: <g><rect x="2" y="2" width="20" height="20" fill="#eaf3fc" stroke="#8fb3da" strokeWidth="1.500" /><path d="M5 7h5M5 16h5" stroke="#6d9fd6" strokeWidth="2" /><rect x="12" y="4.500" width="7" height="5" fill="#fff" stroke="#6d9fd6" strokeWidth="1.500" /><rect x="12" y="13.500" width="7" height="5" fill="#fff" stroke="#6d9fd6" strokeWidth="1.500" /></g>,
  qgis: <g><circle cx="11.500" cy="11.500" r="8.500" fill="none" stroke="#589632" strokeWidth="4.500" /><path d="M4 5a9 9 0 0 1 14 1" fill="none" stroke="#93b023" strokeWidth="4.500" /><path d="M11 11h5l7 8v4h-4l-8-8z" fill="#589632" stroke="#fff" /><path d="M11 11h5l3 3.500-3.500 3.500-4.500-4z" fill="#ee7913" /></g>,
  minimize: <path d="M6 12.500h12" stroke="#000" strokeWidth="1.200" />,
  restore: <path d="M6 9h9v9H6zM8.500 9V6.500h9v9H15" fill="none" stroke="#000" strokeWidth="1.200" />,
  close: <path d="M6 6l12 12M18 6L6 18" stroke="#000" strokeWidth="1.200" />,
  float: <g fill="none" stroke="#555" strokeWidth="2"><rect x="2" y="2" width="20" height="20" rx="3" /><circle cx="10" cy="14" r="4" /><path d="M11 10V6h7v8h-4" /></g>,
  dockClose: <g fill="none" stroke="#555" strokeWidth="2"><rect x="2" y="2" width="20" height="20" rx="3" /><path d="M7 7l10 10M17 7L7 17" strokeWidth="4" /></g>,
  down: <path d="M2 6h20L12 18z" fill="#555" />,
  up: <path d="M2 18h20L12 6z" fill="#555" />,
  right: <path d="M6 1l13 11L6 23z" fill="#555" />,
};

const Svg = styled.svg`display: block; flex: none; overflow: visible;`;
const Icon = ({ n, s = 24 }: { n: string; s?: number }) => (
  <Svg width={s} height={s} viewBox="0 0 24 24" aria-hidden="true">{art[n]}</Svg>
);

/* ---------- shared controls ---------- */

const faded = css`> svg { filter: grayscale(0.7); opacity: 0.35; }`;

const ToolButton = styled.button<{ $on?: boolean; $w?: number }>`
  position: relative;
  display: flex; align-items: center; justify-content: center; flex: none;
  width: ${p => (p.$w ?? 31)}px; height: 32px; margin: 0 1px; padding: 0;
  border: 1px solid ${p => (p.$on ? "#aaa" : "transparent")};
  border-radius: 3px;
  background: ${p => (p.$on ? "#dadada" : "none")};
  &:disabled { ${faded} }
`;
const Corner = styled.span`position: absolute; right: 0; bottom: 2px;`;
const Menu = styled.button`
  display: flex; align-items: center; justify-content: center; flex: none;
  width: 15px; height: 32px; padding: 0; border: 0; background: none;
  &:disabled { opacity: 0.5; }
`;
const Handle = styled.span`
  flex: none; width: 5px; height: 20px; margin: 0 4px 0 9px;
  background: radial-gradient(circle, #aaa 0 0.8px, transparent 1px) 0 0 / 3px 3px;
  &:first-child { margin: 0 3px 0 6px; }
`;
const Sep = styled.span`flex: none; width: 1px; height: 24px; margin: 0 3px; background: #ccc;`;
const More = styled.button`
  width: 32px; flex: none; padding: 0 0 2px 6px; border: 0; background: none; font-size: 17px; font-weight: 600; text-align: center;
`;

type Item = string;
/* "|" is a drag handle, "/" a separator, "v" a drop-down arrow; "-" in front disables, "+" marks active, "~" adds a corner arrow */
const Tools = ({ items, s = 24, w }: { items: Item[]; s?: number; w?: number }) => (
  <>
    {items.map((raw, i) => {
      if (raw === "|") return <Handle key={i} />;
      if (raw === "/") return <Sep key={i} />;
      if (raw === "v" || raw === "-v")
        return <Menu key={i} disabled={raw !== "v"} aria-label="Menu"><Icon n="down" s={9} /></Menu>;
      const n = raw.replace(/^[-+~]+/, "");
      const flags = raw.slice(0, raw.length - n.length);
      return (
        <ToolButton key={i} $w={w} $on={flags.includes("+")} disabled={flags.includes("-")} aria-label={n}>
          <Icon n={n} s={s} />
          {flags.includes("~") && <Corner><Icon n="down" s={8} /></Corner>}
        </ToolButton>
      );
    })}
  </>
);

/* ---------- window frame ---------- */

const Window = styled.div`display: flex; flex-direction: column; height: 100vh; overflow: hidden; border-bottom: 2px solid #333;`;
const TitleBar = styled.header`
  display: flex; align-items: center; gap: 5px; height: 29px; flex: none; padding-left: 2px; background: #fff; font-size: 14px;
`;
const WinButtons = styled.div`display: flex; margin-left: auto; padding-right: 3px;`;
const WinButton = styled.button`width: 58px; height: 28px; display: grid; place-items: center; border: 0; padding: 0; background: none;`;
const MenuBar = styled.nav`
  display: flex; align-items: center; gap: 15px; height: 23px; flex: none; padding-left: 11px; border-bottom: 1px solid #ccc; white-space: nowrap;
`;
const MenuItem = styled.button`padding: 0; border: 0; background: none;`;
const Bar = styled.div`
  display: flex; align-items: center; flex: none; height: 39px;
  background: linear-gradient(#fbfbfb, #eee); border-bottom: 1px solid ${line};
`;
const LastBar = styled(Bar)`height: 40px; border-bottom-width: 2px;`;
const Body = styled.div`display: flex; flex: 1; min-height: 0;`;
const Side = styled.div`
  width: 55px; flex: none; display: flex; flex-direction: column; align-items: center;
  border-right: 1px solid ${line}; background: linear-gradient(90deg, #fbfbfb, #ececec);
`;
const SideHandle = styled.span`
  flex: none; height: 5px; width: 18px; margin: 7px 0 6px;
  background: radial-gradient(circle, #aaa 0 0.8px, transparent 1px) 0 0 / 3px 3px;
  &:first-child { margin: 5px 0 3px; }
`;
const SideRow = styled.div`display: flex; align-items: center; flex: none; height: 32px;`;

/* ---------- docks ---------- */

const Dock = styled.section<{ $basis?: number }>`
  display: flex; flex-direction: column; min-height: 0;
  flex: ${p => (p.$basis ? `0 1 ${p.$basis}px` : "1")};
`;
const DockTitle = styled.div`
  display: flex; align-items: center; gap: 2px; height: 22px; padding: 0 2px 0 4px; flex: none; font-size: 14px; white-space: nowrap;
  > span { flex: 1; }
`;
const SmallButton = styled.button`display: block; padding: 0; border: 0; background: none;`;
const DockTools = styled.div`
  display: flex; align-items: center; height: 28px; padding-left: 3px; flex: none;
  ${More} { width: 20px; margin-left: auto; padding: 0 0 2px; }
`;
const DockButton = styled.button<{ $w: number }>`
  display: grid; place-items: center; width: ${p => p.$w}px; height: 26px; padding: 0; border: 0; background: none; flex: none;
  &:disabled { ${faded} }
`;
const Left = styled.div`width: 227px; flex: none; display: flex; flex-direction: column; padding-right: 8px;`;
const Well = styled.div`display: flex; flex: 1; min-height: 0; background: #fff; border: 1px solid ${line}; overflow: hidden;`;
const LayerList = styled.ul`flex: 1; padding-top: 1px;`;
const LayerRow = styled.li<{ $on?: boolean }>`
  display: flex; align-items: center; height: 21px; padding: 0 2px 0 27px; font-weight: 600;
  background: ${p => (p.$on ? "#efefef" : "none")};
  text-decoration: ${p => (p.$on ? "underline" : "none")};
  label { display: flex; align-items: center; gap: 6px; flex: 1; }
`;
const Check = styled.input`
  appearance: none; display: block; position: relative; width: 17px; height: 17px; background: #fff; border: 1px solid #b0b0b0; flex: none;
  &:checked::after {
    content: ""; position: absolute; left: 5px; top: 1px; width: 5px; height: 11px;
    border: solid #000; border-width: 0 2px 2px 0; transform: rotate(35deg);
  }
`;
const Swatch = styled.span`width: 19px; height: 19px; background: #bccd4b; border: 1px solid #555;`;
const Splitter = styled.div`
  height: 7px; flex: none; display: grid; place-items: center;
  &::after { content: ""; width: 18px; height: 3px; background: radial-gradient(circle, #aaa 0 0.8px, transparent 1px) 0 0 / 3px 3px; }
`;
const TreeList = styled.ul`flex: 1; padding-top: 1px; overflow: hidden;`;
const TreeRow = styled.li`display: flex; align-items: center; gap: 7px; height: 22px; padding-left: 7px; white-space: nowrap;`;
const Twist = styled.button`display: grid; place-items: center; width: 10px; height: 16px; margin-right: 5px; padding: 0; border: 0; background: none;`;
const Scroll = styled.div`width: 17px; flex: none; display: flex; flex-direction: column; border-left: 1px solid ${line}; background: #f7f7f7;`;
const ScrollButton = styled.button`display: grid; place-items: center; height: 17px; padding: 0; border: 0; background: #fdfdfd;`;
const Thumb = styled.div`height: 37px; border: solid ${line}; border-width: 1px 0; background: #e6e6e6;`;
const Fill = styled.div`flex: 1; border-bottom: 1px solid ${line};`;

/* ---------- map ---------- */

const Canvas = styled.main`
  position: relative; flex: 1; min-width: 0; background: #fff; border: 1px solid ${line}; border-top: 0;
  overflow: hidden;
`;
const MapSvg = styled.svg`display: block; width: 100%; height: 100%; font-family: ${mapFont};`;
const Label = styled.text`
  font-size: 22px; text-anchor: middle; dominant-baseline: central;
  paint-order: stroke; stroke: #fff; stroke-width: 4px; stroke-linejoin: round;
`;
const Callout = styled.text`font-size: 20px;`;
const Credit = styled.p`position: absolute; right: 5px; bottom: 3px; margin: 0; font: 23px/28px ${mapFont};`;

const origin = { x: 555, y: 699.5 };
const up = { x: 33.68, y: -37.96 };
const across = { x: 60.75, y: 54.25 };
const at = (c: number, r: number) => [origin.x + c * across.x + r * up.x, origin.y + c * across.y + r * up.y];
const seg = (c1: number, r1: number, c2: number, r2: number) => `M${at(c1, r1)}L${at(c2, r2)}`;

const MapDrawing = () => (
  <MapSvg viewBox="283 130 1380 916" role="img" aria-label="Mappa">
    <path d={`M${at(0, 0)}L${at(0, 14)}L${at(6, 14)}L${at(6, 0)}Z`} fill="#bccd4b" stroke="#232323" strokeWidth="1.200" />
    <path
      d={[1, 2, 3, 4, 5].map(c => seg(c, 0, c, 14)).join("") + Array.from({ length: 13 }, (_, i) => seg(0, i + 1, 6, i + 1)).join("")}
      stroke="#232323" strokeWidth="1.200"
    />
    <path d="M555 699.500L982 166" stroke="#000" strokeWidth="2" />
    <path d="M992.600 152.500L971 168l11 8.500z" fill="#000" stroke="#000" />
    <path d="M523.500 213.500H719v106.500L809 382 719 330H523.500z" fill="#fff" stroke="#000" strokeWidth="1.500" />
    <path d="M803 382h11M808.500 377v11" stroke="#666" />
    {["Linea di riferimento", "rispetto alla quale", "calcolare le distanze", "dei rettangoli"].map((t, i) => (
      <Callout key={t} x="527" y={237 + i * 24}>{t}</Callout>
    ))}
    {Array.from({ length: 84 }, (_, i) => {
      const [x, y] = at(Math.floor(i / 14) + 0.5, (i % 14) + 0.5);
      return <Label key={i} x={x} y={y}>{i + 1}</Label>;
    })}
  </MapSvg>
);

/* ---------- attribute table ---------- */

const Right = styled.div`width: 256px; flex: none; display: flex; flex-direction: column; padding-left: 7px;`;
const Sheet = styled.div`flex: 1; min-height: 0; border: solid ${line}; border-width: 1px 0 1px 1px; background: linear-gradient(90deg, #efefef 11px, #fff 11px);`;
const SheetHead = styled.div`background: linear-gradient(#efefef, #efefef) 0 0 / 100% 22px no-repeat;`;
const Table = styled.table`
  border-collapse: collapse; table-layout: fixed; width: 136px;
  col:first-child { width: 11px; }
  th, td { font-weight: 400; padding: 0 3px; border: solid ${line}; border-width: 0 1px 1px 0; }
  thead th, thead td { height: 22px; padding: 0; background: linear-gradient(#fdfdfd, #efefef); border-right: 0; }
  tbody th { height: 37px; padding: 0; background: #f6f6f6; }
  tbody td { text-align: right; background: #fff; }
`;
const Foot = styled.div`display: flex; align-items: center; height: 30px; padding: 0 3px; gap: 1px; flex: none;`;
const FilterButton = styled.button`
  display: flex; align-items: center; gap: 5px; flex: 1; min-width: 0; height: 27px; padding: 0 1px 0 6px; position: relative;
  border: 1px solid #aaa; border-radius: 3px; background: linear-gradient(#fdfdfd, #eee); white-space: nowrap; overflow: hidden;
`;

/* ---------- fields and status bar ---------- */

const Status = styled.footer`display: flex; align-items: center; height: 30px; flex: none; padding: 2px 22px 0 4px; white-space: nowrap;`;
const Field = styled.div<{ $w: number }>`
  display: flex; flex: none; width: ${p => p.$w}px; height: 27px; background: #fff; border: 1px solid #aaa; border-radius: 3px; overflow: hidden;
  align-items: center; position: relative;
  input, select { flex: 1; min-width: 0; height: 100%; padding: 0 3px; border: 0; background: none; outline: 0; appearance: none; }
  input::placeholder { color: #777; opacity: 1; }
`;
const CoordField = styled(Field)`
  input { font-size: 12px; text-align: center; padding: 0; }
`;
const Spin = styled.span`
  width: 17px; align-self: stretch; display: flex; flex-direction: column; border-left: 1px solid #aaa; background: #f7f7f7;
  button { flex: 1; display: grid; place-items: center; padding: 0; border: 0; background: none; }
`;
const ComboArrow = styled.span`position: absolute; right: 0; top: 0; bottom: 0; width: 25px; display: grid; place-items: center; background: #f4f4f4; pointer-events: none;`;
const ToolCombo = styled(Field)`
  height: 29px; margin: 0 1px 0 2px; background: linear-gradient(#fdfdfd, #eee);
  ${ComboArrow} { background: none; width: 20px; }
`;
const SnapField = styled(Field)`margin-left: 1px;`;
const Search = styled.span`padding: 0 4px 0 8px;`;
const Message = styled.span`flex: 1; min-width: 0; padding-left: 9px; overflow: hidden;`;
const Cell = styled.label<{ $l?: number; $r?: number }>`margin-left: ${p => p.$l ?? 0}px; margin-right: ${p => p.$r ?? 4}px;`;
const StatusButton = styled.button<{ $l?: number }>`
  display: flex; align-items: center; gap: 4px; padding: 0; border: 0; background: none; margin-left: ${p => p.$l ?? 0}px;
`;

const Spinner = () => (
  <Spin>
    <button aria-label="Aumenta"><Icon n="up" s={8} /></button>
    <button aria-label="Diminuisci"><Icon n="down" s={8} /></button>
  </Spin>
);
const DockHead = ({ title }: { title: string }) => (
  <DockTitle>
    <span>{title}</span>
    <SmallButton aria-label="Sgancia"><Icon n="float" s={12} /></SmallButton>
    <SmallButton aria-label="Chiudi"><Icon n="dockClose" s={12} /></SmallButton>
  </DockTitle>
);
const DockIcons = ({ items, w = 25 }: { items: string[]; w?: number }) => (
  <>
    {items.map((n, i) =>
      n === "v" ? <Menu key={i} aria-label="Menu"><Icon n="down" s={9} /></Menu>
        : n === "/" ? <Sep key={i} />
          : <DockButton key={i} $w={w} disabled={n[0] === "-"} aria-label={n}><Icon n={n.replace("-", "")} s={16} /></DockButton>
    )}
  </>
);

const menus = ["P_rogetto", "_Modifica", "_Visualizza", "_Layer", "_Impostazioni", "_Plugins", "Vett_ore", "_Raster", "_Database", "_Web", "_Mesh", "HCMGIS", "_Location Lab", "MMQGIS", "Pro_cessing", "_Guida"];

const row1 = "| new open save newLayout layouts styles | +pan panSel zoomIn zoomOut -zoomNative zoomFull zoomSel zoomLayer zoomLast -zoomNext newView newMark marks refresh | identify -action -v select v selExpr v deselect table abacus gear sigma ruler v tip textNote v | help | dbGear | penta | | gridPlus | mapLeaf mapBrush | qBird | qSat | redo2 undo2 | www | hammer -plan".split(" ");
const row2a = "| addLayer geopkg shp spatial memory / virtual | ~-pencils pencil -saveEdit -addFeat -vertex -v -attrs -copy2 -trash -cut -copy -paste -undo -redo | db | label chart labPin labPin2 labEye labMove labRot labEdit | +magnet ~snapV ~snapD".split(" ");
const row2b = "topo inter trace v | -arc -v -circ -v -ell -v -rect -v".split(" ");
const row2c = "| ogs xtf1 xtf2".split(" ");
const side1 = "cad moveF rotF simp ring part fillR delR delP reshape offset nodes trim split split merge mergeA rotPt".split(" ");

const browser: [string, string][] = [
  ["folder", "C:\\"], ["folder", "D:\\"], ["folder", "E:\\"], ["folder", "F:\\"], ["box", "GeoPackage"], ["feather", "SpatiaLite"],
  ["postgis", "PostGIS"], ["mssql", "MSSQL"], ["oracle", "Oracle"], ["db2", "DB2"], ["earth", "WMS/WMTS"], ["earth", "XYZ Tiles"],
  ["wcs", "WCS"], ["wfs", "WFS"], ["ows", "OWS"], ["arcmap", "ArcGisMapServer"], ["arcfeat", "ArcGisFeatureServer"], ["geonode", "GeoNode"],
];

export default function App() {
  return (
    <Window>
      <GlobalStyle />
      <TitleBar>
        <Icon n="qgis" s={20} />
        <span>*Progetto Senza Titolo - QGIS b711ef01f8</span>
        <WinButtons>
          <WinButton aria-label="Riduci"><Icon n="minimize" /></WinButton>
          <WinButton aria-label="Ripristina"><Icon n="restore" /></WinButton>
          <WinButton aria-label="Chiudi"><Icon n="close" /></WinButton>
        </WinButtons>
      </TitleBar>
      <MenuBar>
        {menus.map(m => {
          const k = m.indexOf("_");
          return (
            <MenuItem key={m}>
              {k < 0 ? m : <>{m.slice(0, k)}<u>{m[k + 1]}</u>{m.slice(k + 2)}</>}
            </MenuItem>
          );
        })}
      </MenuBar>
      <Bar><Tools items={row1} /></Bar>
      <LastBar>
        <Tools items={row2a} />
        <SnapField $w={101}><input aria-label="Tolleranza" defaultValue="0,00" /><Spinner /></SnapField>
        <ToolCombo $w={65}>
          <select aria-label="Unità"><option>metri</option></select>
          <ComboArrow><Icon n="down" s={10} /></ComboArrow>
        </ToolCombo>
        <Tools items={row2b} />
        <More aria-label="Altro">»</More>
        <Tools items={row2c} />
      </LastBar>
      <Body>
        <Side>
          <SideHandle />
          {side1.map((n, i) => (
            <SideRow key={i}>
              <Tools items={["-" + n]} w={n === "moveF" || n === "rotPt" ? 28 : 31} />
              {(n === "moveF" || n === "rotPt") && <Menu disabled aria-label="Menu"><Icon n="down" s={9} /></Menu>}
            </SideRow>
          ))}
          <SideHandle />
          {["topoCheck", "tableSync"].map(n => <SideRow key={n}><Tools items={[n]} /></SideRow>)}
          <SideHandle />
          {["tri", "~globeAdd", "globeFind", "binoc"].map(n => <SideRow key={n}><Tools items={[n]} /></SideRow>)}
        </Side>
        <Left>
          <Dock $basis={461}>
            <DockHead title="Layer" />
            <DockTools>
              <DockIcons items={["brush", "addGroup", "eye", "funnel", "exprFilter", "v", "expand", "collapse"]} />
              <More aria-label="Altro">»</More>
            </DockTools>
            <Well>
              <LayerList>
                <LayerRow $on>
                  <label>
                    <Check type="checkbox" defaultChecked />
                    <Svg width="20" height="12" viewBox="0 0 20 12"><path d="M0 0l20 6-20 6z" fill="#16304f" /></Svg>
                    linea
                  </label>
                  <Icon n="chip" s={17} />
                </LayerRow>
                <LayerRow>
                  <label><Check type="checkbox" defaultChecked /><Swatch />prova</label>
                  <Icon n="funnelPlain" s={16} />
                </LayerRow>
              </LayerList>
            </Well>
          </Dock>
          <Splitter />
          <Dock>
            <DockHead title="Browser" />
            <DockTools>
              <DockIcons items={["addSel", "refresh", "funnel", "collapse", "info"]} />
            </DockTools>
            <Well>
              <TreeList>
                {browser.map(([n, t]) => (
                  <TreeRow key={t}>
                    <Twist aria-label={"Espandi " + t}><Icon n="right" s={9} /></Twist>
                    <Icon n={n} s={19} />
                    <span>{t}</span>
                  </TreeRow>
                ))}
              </TreeList>
              <Scroll>
                <ScrollButton aria-label="Su"><Icon n="up" s={9} /></ScrollButton>
                <Thumb />
                <Fill />
                <ScrollButton aria-label="Giù"><Icon n="down" s={9} /></ScrollButton>
              </Scroll>
            </Well>
          </Dock>
        </Left>
        <Canvas>
          <MapDrawing />
          <Credit>© Salvatore Fiandaca 2019 QGIS 3.4.4-3</Credit>
        </Canvas>
        <Right>
          <DockHead title="linea :: Totale degli elementi: 1..." />
          <DockTools>
            <DockIcons w={24} items={["pencil", "-attrs", "-saveEdit", "refresh", "/", "-newField", "-trash", "-cut", "-copy", "-paste"]} />
            <More aria-label="Altro">»</More>
          </DockTools>
          <Sheet>
            <SheetHead>
              <Table>
                <colgroup><col /><col /></colgroup>
                <thead><tr><td /><th scope="col">id</th></tr></thead>
                <tbody><tr><th scope="row">1</th><td>1</td></tr></tbody>
              </Table>
            </SheetHead>
          </Sheet>
          <Foot>
            <FilterButton><Icon n="funnel" s={18} />Mostra tutti gli elementi<Corner><Icon n="down" s={8} /></Corner></FilterButton>
            <Tools items={["form"]} s={18} w={25} />
            <Tools items={["+table"]} s={18} w={28} />
          </Foot>
        </Right>
      </Body>
      <Status>
        <Field $w={308}>
          <Search><Icon n="search" s={14} /></Search>
          <input aria-label="Localizza" placeholder="Digita per localizzare (Ctrl+K)" />
        </Field>
        <Message>Non ci sono geometrie in questa posizione.</Message>
        <Cell htmlFor="coord">Coordinate</Cell>
        <CoordField $w={153}><input id="coord" defaultValue="2308608.90,4171110.80" /></CoordField>
        <StatusButton $l={5} aria-label="Traccia mouse"><Icon n="mouse" s={20} /></StatusButton>
        <Cell htmlFor="scale" $l={12}>Scala</Cell>
        <Field $w={91}>
          <select id="scale"><option>1:143</option></select>
          <ComboArrow><Icon n="down" s={10} /></ComboArrow>
        </Field>
        <StatusButton $l={11} aria-label="Blocca scala"><Icon n="lock" s={18} /></StatusButton>
        <Cell htmlFor="zoom" $l={8}>Lente d'ingrandimento</Cell>
        <Field $w={92}><input id="zoom" defaultValue="100%" /><Spinner /></Field>
        <Cell htmlFor="rot" $l={10} $r={10}>Rotazione</Cell>
        <Field $w={89}><input id="rot" defaultValue="0,0 °" /><Spinner /></Field>
        <Cell $l={6} $r={7}><Check id="render" type="checkbox" defaultChecked aria-label="Visualizza" /></Cell>
        <label htmlFor="render">Visualizza</label>
        <StatusButton $l={16}><Icon n="crs" s={18} />EPSG:3004</StatusButton>
        <StatusButton $l={18} aria-label="Messaggi"><Icon n="bubble" s={20} /></StatusButton>
      </Status>
    </Window>
  );
}
